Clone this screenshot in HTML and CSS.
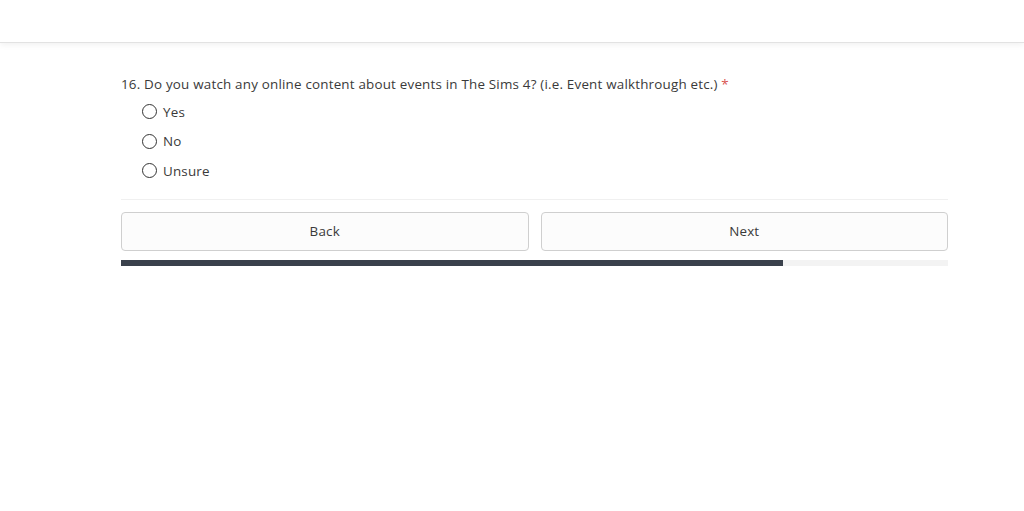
FILE: index.html
```html
<!DOCTYPE html>
<html>
<head>
<meta charset="utf-8">
<link rel="stylesheet" href="styles.css">
</head>
<body>
<header class="topbar"></header>
<main class="survey">
  <fieldset class="question">
    <legend class="q-title">16. Do you watch any online content about events in The Sims 4? (i.e. Event walkthrough etc.) <span class="req">*</span></legend>
    <label class="option"><span class="radio"></span><span>Yes</span></label>
    <label class="option"><span class="radio"></span><span>No</span></label>
    <label class="option"><span class="radio"></span><span>Unsure</span></label>
  </fieldset>
  <div class="nav">
    <button class="btn">Back</button>
    <button class="btn">Next</button>
  </div>
  <div class="progress"><div class="progress-fill" style="width:80%"></div></div>
</main>
</body>
</html>
```
FILE: styles.css
```css
* { box-sizing: border-box; }
html, body { margin: 0; padding: 0; background: #fff; }
body { font-family: "Open Sans", "Noto Sans", sans-serif; color: #3a3a3a; }
.topbar {
  height: 43px;
  background: #fff;
  border-bottom: 1px solid #e2e2e2;
  box-shadow: 0 2px 6px rgba(0,0,0,0.06);
}
.survey {
  width: 827px;
  margin: 0 0 0 121px;
  padding-top: 32px;
}
.question {
  border: 0;
  margin: 0;
  padding: 0 0 13px 0;
  border-bottom: 1px solid #f0f0f0;
  display: flex;
  flex-direction: column;
}
.q-title {
  padding: 0;
  font-size: 13.4px;
  line-height: 18px;
  letter-spacing: 0.2px;
  color: #3a3a3a;
  margin-bottom: 4px;
  float: left;
  width: 100%;
}
.req { color: #d9534f; }
.option {
  display: flex;
  align-items: center;
  gap: 6px;
  height: 29.5px;
  padding-left: 21px;
  font-size: 13.4px;
  letter-spacing: 0.2px;
  color: #3a3a3a;
}
.radio {
  width: 15px;
  height: 15px;
  border: 1.8px solid #333;
  border-radius: 50%;
  flex: none;
}
.nav {
  display: grid;
  grid-template-columns: 1fr 1fr;
  gap: 12px;
  margin-top: 12px;
}
.btn {
  height: 39px;
  border: 1px solid #cfcfcf;
  border-radius: 4px;
  background: #fcfcfc;
  font-family: inherit;
  font-size: 13.4px;
  letter-spacing: 0.2px;
  color: #3a3a3a;
}
.progress {
  margin-top: 9px;
  height: 6px;
  background: #f3f3f3;
}
.progress-fill {
  height: 100%;
  background: #3a414c;
}
```
